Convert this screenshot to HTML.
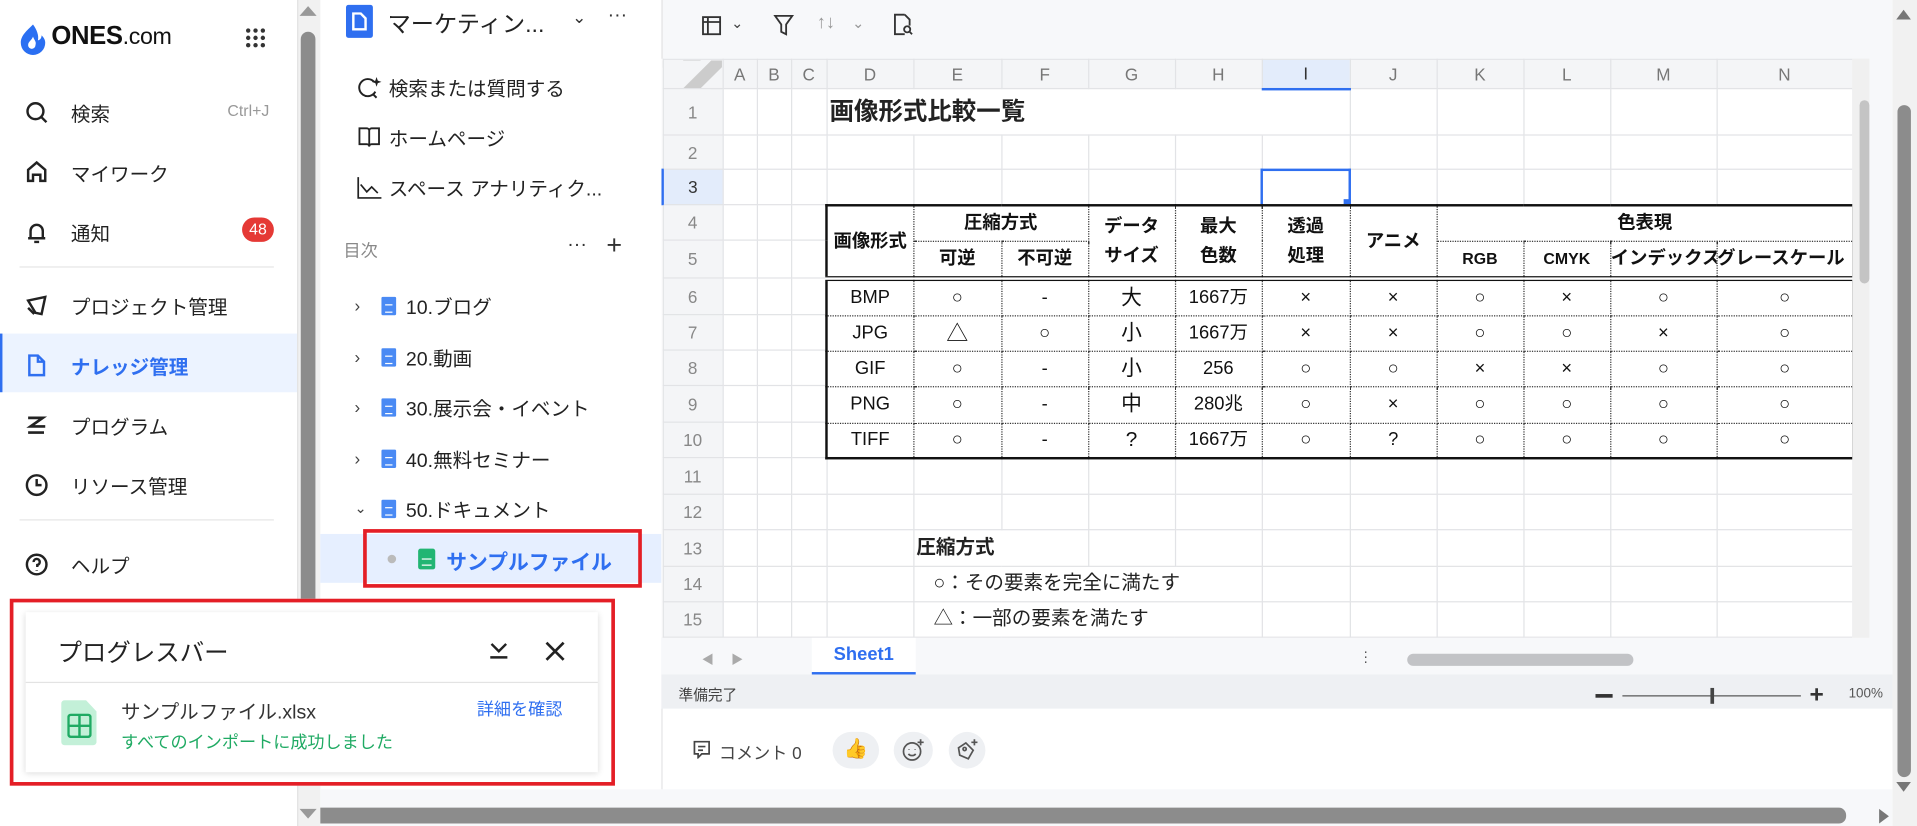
<!DOCTYPE html>
<html><head><meta charset="utf-8"><style>
*{box-sizing:border-box;margin:0;padding:0}
html,body{width:1917px;height:826px;overflow:hidden;background:#fff}
body{font-family:"Liberation Sans","Noto Sans CJK JP",sans-serif;color:#222}
#w{position:absolute;left:0;top:0;width:1568px;height:676px;transform:scale(1.2226,1.2219);transform-origin:0 0;overflow:hidden}
.a{position:absolute}
.nav{position:absolute;left:20px;font-size:16px;color:#222;display:flex;align-items:center}
.nav svg{margin-right:18px}
.tree{position:absolute;font-size:16px;color:#222;display:flex;align-items:center}
.doc{display:inline-block;width:12px;height:15px;background:#4a8af4;border-radius:1px;margin-right:8px;position:relative}
.doc:after{content:"";position:absolute;left:3px;top:6px;width:6px;height:5px;border-top:1px solid #fff;border-bottom:1px solid #fff}
.chev{display:inline-block;width:22px;color:#444;font-size:14px}
table{border-collapse:collapse;table-layout:fixed}
#g td{border:1px solid #e2e3e6;height:0;padding:0;font-size:15px;white-space:nowrap;overflow:visible;line-height:18px}
#g .rh{background:#f4f5f7;color:#888;text-align:center;font-size:14px}
#g .ch td{background:#f4f5f7;color:#777;text-align:center;font-size:14px}
#d td{border:1px dotted #333;text-align:center;font-size:15px;padding:0;color:#111;line-height:18px}
#d .h{font-weight:bold}
</style></head><body><div id="w">

<div class="a" style="left:0;top:0;width:243px;height:676px;background:#fff"></div>
<svg class="a" style="left:15px;top:19px" width="24" height="26" viewBox="0 0 24 26"><path d="M12 1C7 6 2 10 2 16a10 10 0 0 0 20 0c0-3-2-5-3-6 0 3-2 4-3 4 1-4-1-9-4-13z" fill="#2a6ff2"/><path d="M8 18c0-3 3-4 4-7 1 3 3 4 2 7a3 3 0 0 1-6 0z" fill="#fff"/></svg>
<div class="a" style="left:42px;top:18px;font-size:21px;font-weight:bold;color:#111;letter-spacing:-0.3px">ONES<span style="font-weight:normal;font-size:19px">.com</span></div>
<svg class="a" style="left:201px;top:23px" width="16" height="16"><g fill="#333"><circle cx="2" cy="2" r="1.8"/><circle cx="8" cy="2" r="1.8"/><circle cx="14" cy="2" r="1.8"/><circle cx="2" cy="8" r="1.8"/><circle cx="8" cy="8" r="1.8"/><circle cx="14" cy="8" r="1.8"/><circle cx="2" cy="14" r="1.8"/><circle cx="8" cy="14" r="1.8"/><circle cx="14" cy="14" r="1.8"/></g></svg>

<div class="nav" style="top:80px"><svg width="20" height="20" viewBox="0 0 20 20" fill="none" stroke="#222" stroke-width="2"><circle cx="9" cy="9" r="6.5"/><path d="M14 14l4 4"/></svg>検索</div>
<div class="a" style="left:186px;top:83px;font-size:13px;color:#999">Ctrl+J</div>
<div class="nav" style="top:129px"><svg width="20" height="20" viewBox="0 0 20 20" fill="none" stroke="#222" stroke-width="2"><path d="M3 17V8l7-6 7 6v9h-4v-5H7v5z"/></svg>マイワーク</div>
<div class="nav" style="top:178px"><svg width="20" height="20" viewBox="0 0 20 20" fill="none" stroke="#222" stroke-width="2"><path d="M5 15V9a5 5 0 0 1 10 0v6zM3 15h14M8 18h4"/></svg>通知</div>
<div class="a" style="left:198px;top:178px;width:26px;height:20px;border-radius:10px;background:#e53935;color:#fff;font-size:13px;text-align:center;line-height:20px">48</div>
<div class="a" style="left:16px;top:218px;width:208px;height:1px;background:#e5e5e5"></div>
<div class="nav" style="top:238px"><svg width="20" height="20" viewBox="0 0 20 20" fill="none" stroke="#222" stroke-width="2"><path d="M3 6l14-3-3 14-5-1z"/><path d="M3 12l5 5"/></svg>プロジェクト管理</div>
<div class="a" style="left:0;top:273px;width:243px;height:48px;background:#ecf3ff;border-left:2px solid #2f6ff0"></div>
<div class="nav" style="top:287px;color:#2f6ff0;font-weight:bold"><svg width="20" height="20" viewBox="0 0 20 20" fill="none" stroke="#2f6ff0" stroke-width="2"><path d="M4 2h7l5 5v11H4z M11 2v5h5"/></svg>ナレッジ管理</div>
<div class="nav" style="top:336px"><svg width="20" height="20" viewBox="0 0 20 20" fill="none" stroke="#222" stroke-width="2.2"><path d="M3 4h12L5 11h12M3 16h13"/></svg>プログラム</div>
<div class="nav" style="top:385px"><svg width="20" height="20" viewBox="0 0 20 20" fill="none" stroke="#222" stroke-width="2"><circle cx="10" cy="10" r="8"/><path d="M10 5v5h4"/></svg>リソース管理</div>
<div class="a" style="left:16px;top:425px;width:208px;height:1px;background:#e5e5e5"></div>
<div class="nav" style="top:450px"><svg width="20" height="20" viewBox="0 0 20 20" fill="none" stroke="#222" stroke-width="2"><circle cx="10" cy="10" r="8"/><path d="M7.5 8a2.5 2.5 0 1 1 3 2.4V12M10 14.5v.5"/></svg>ヘルプ</div>

<div class="a" style="left:243px;top:0;width:19px;height:676px;background:#f1f1f1;border-left:1px solid #e3e3e3"></div>
<div class="a" style="left:246px;top:26px;width:12px;height:600px;background:#8c8c8c;border-radius:6px"></div>
<div class="a" style="left:245px;top:5px;width:0;height:0;border-left:7px solid transparent;border-right:7px solid transparent;border-bottom:8px solid #999"></div>
<div class="a" style="left:245px;top:662px;width:0;height:0;border-left:7px solid transparent;border-right:7px solid transparent;border-top:8px solid #999"></div>

<div class="a" style="left:283px;top:4px;width:22px;height:27px;background:#2f6ff0;border-radius:2px"></div>
<svg class="a" style="left:287px;top:10px" width="14" height="16" fill="none" stroke="#fff" stroke-width="2"><path d="M2 1h6l4 4v9H2z"/></svg>
<div class="a" style="left:317px;top:5px;font-size:19px;color:#222">マーケティン...</div>
<div class="a" style="left:468px;top:6px;font-size:14px;color:#333">&#8964;</div>
<div class="a" style="left:497px;top:4px;font-size:16px;color:#333">···</div>
<div class="tree" style="left:292px;top:59px"><svg width="20" height="20" style="margin-right:6px" fill="none" stroke="#222" stroke-width="1.6"><path d="M14 6a7 7 0 1 0 1 8M13 16l3 3"/><path d="M16 2l1 3 3 1-3 1-1 3-1-3-3-1 3-1z" fill="#222" stroke="none"/></svg>検索または質問する</div>
<div class="tree" style="left:292px;top:100px"><svg width="20" height="20" style="margin-right:6px" fill="none" stroke="#222" stroke-width="1.5"><path d="M2 3h6a2 2 0 0 1 2 2v13a2 2 0 0 0-2-2H2zM18 3h-6a2 2 0 0 0-2 2v13a2 2 0 0 1 2-2h6z"/></svg>ホームページ</div>
<div class="tree" style="left:292px;top:141px"><svg width="20" height="20" style="margin-right:6px" fill="none" stroke="#222" stroke-width="1.4"><path d="M1 2v17h19M3 8l5 6 4-4 5 5"/></svg>スペース アナリティク...</div>
<div class="a" style="left:281px;top:195px;font-size:14px;color:#888">目次</div>
<div class="a" style="left:464px;top:192px;font-size:16px;color:#333">···</div>
<div class="a" style="left:496px;top:188px;font-size:22px;color:#333;font-weight:300">+</div>
<div class="tree" style="left:290px;top:238px"><span class="chev">&#8250;</span><span class="doc"></span>10.ブログ</div>
<div class="tree" style="left:290px;top:280px"><span class="chev">&#8250;</span><span class="doc"></span>20.動画</div>
<div class="tree" style="left:290px;top:321px"><span class="chev">&#8250;</span><span class="doc"></span>30.展示会・イベント</div>
<div class="tree" style="left:290px;top:363px"><span class="chev">&#8250;</span><span class="doc"></span>40.無料セミナー</div>
<div class="tree" style="left:290px;top:404px"><span class="chev" style="font-size:12px">&#8964;</span><span class="doc"></span>50.ドキュメント</div>
<div class="a" style="left:262px;top:437px;width:279px;height:40px;background:#e6efff"></div>
<div class="a" style="left:297px;top:433px;width:228px;height:48px;border:3px solid #e41e26"></div>
<div class="a" style="left:317px;top:454px;width:7px;height:7px;border-radius:50%;background:#bbb"></div>
<div class="a" style="left:342px;top:449px;width:14px;height:17px;background:#22b573;border-radius:2px"></div>
<div class="a" style="left:345px;top:457px;width:8px;height:6px;border:1px solid #fff;border-width:1px 0"></div>
<div class="a" style="left:365px;top:446px;font-size:17px;color:#2f6ff0;font-weight:bold">サンプルファイル</div>
<div class="tree" style="left:312px;top:488px"><span style="display:inline-block;width:7px;height:7px;border-radius:50%;background:#bbb;margin-right:18px"></span><span class="doc"></span>90.その他</div>

<div class="a" style="left:8px;top:490px;width:495px;height:153px;border:3px solid #e41e26;background:#fff"></div>
<div class="a" style="left:21px;top:501px;width:468px;height:131px;background:#fff;box-shadow:0 1px 5px rgba(0,0,0,.15)"></div>
<div class="a" style="left:47px;top:518px;font-size:20px;color:#222">プログレスバー</div>
<svg class="a" style="left:399px;top:523px" width="18" height="18" fill="none" stroke="#222" stroke-width="2"><path d="M3 4l6 6 6-6M2 15h14"/></svg>
<svg class="a" style="left:445px;top:524px" width="18" height="18" fill="none" stroke="#222" stroke-width="2.2"><path d="M2 2l14 14M16 2L2 16"/></svg>
<div class="a" style="left:21px;top:558px;width:468px;height:1px;background:#e3e3e3"></div>
<div class="a" style="left:50px;top:573px;width:29px;height:37px;background:#c3f0d8;border-radius:3px;clip-path:polygon(0 0,70% 0,100% 25%,100% 100%,0 100%)"></div>
<svg class="a" style="left:55px;top:584px" width="20" height="20" fill="none" stroke="#1faa63" stroke-width="2"><rect x="1" y="1" width="18" height="18" rx="2"/><path d="M1 10h18M10 1v18"/></svg>
<div class="a" style="left:99px;top:569px;font-size:16px;color:#333">サンプルファイル.xlsx</div>
<div class="a" style="left:99px;top:597px;font-size:14px;color:#1faa63">すべてのインポートに成功しました</div>
<div class="a" style="left:390px;top:570px;font-size:14px;color:#2f6ff0">詳細を確認</div>

<div class="a" style="left:541px;top:0;width:1007px;height:646px;background:#f7f8fa;border-left:1px solid #e3e3e3"></div>
<svg class="a" style="left:573px;top:12px" width="18" height="18" fill="none" stroke="#333" stroke-width="1.5"><rect x="2" y="2" width="14" height="14"/><path d="M2 6h14M6 2v14"/></svg>
<div class="a" style="left:598px;top:12px;font-size:12px;color:#444">&#8964;</div>
<svg class="a" style="left:632px;top:11px" width="18" height="20" fill="none" stroke="#333" stroke-width="1.5"><path d="M2 2h14l-5 7v8l-4-2V9z"/></svg>
<div class="a" style="left:668px;top:10px;font-size:15px;color:#999">&#8593;&#8595;</div>
<div class="a" style="left:697px;top:12px;font-size:12px;color:#999">&#8964;</div>
<svg class="a" style="left:729px;top:10px" width="18" height="20" fill="none" stroke="#333" stroke-width="1.5"><path d="M11 2H3v16h8M11 2l4 4v5"/><circle cx="13" cy="14" r="2.5"/><path d="M15 16l2 2"/></svg>

<div class="a" style="left:541px;top:48px;width:974px;height:474px;overflow:hidden">
<table id="g" class="a" style="left:0;top:0;width:974px;background:#fff">
<colgroup><col style="width:49px"><col style="width:28px"><col style="width:28px"><col style="width:29px"><col style="width:71px"><col style="width:72px"><col style="width:71px"><col style="width:71px"><col style="width:71px"><col style="width:72px"><col style="width:71px"><col style="width:71px"><col style="width:71px"><col style="width:87px"><col style="width:111px"></colgroup>
<tr class="ch" style="height:24px"><td style="background:linear-gradient(135deg,#f4f5f7 55%,#ccc 55%,#ccc 75%,#f4f5f7 75%)"></td><td>A</td><td>B</td><td>C</td><td>D</td><td>E</td><td>F</td><td>G</td><td>H</td><td style="background:#e3ecfb;color:#333;border-bottom:2px solid #2f6ff0">I</td><td>J</td><td>K</td><td>L</td><td>M</td><td>N</td></tr>
<tr style="height:38px"><td class="rh">1</td><td></td><td></td><td></td><td colspan="5" style="font-size:20px;font-weight:bold;padding-left:2px;border-right-color:transparent">画像形式比較一覧</td><td></td><td></td><td></td><td></td><td></td><td></td></tr>
<tr style="height:28px"><td class="rh">2</td><td></td><td></td><td></td><td></td><td></td><td></td><td></td><td></td><td></td><td></td><td></td><td></td><td></td><td></td></tr>
<tr style="height:29px"><td class="rh" style="background:#e3ecfb;color:#333;border-left:2px solid #2f6ff0">3</td><td></td><td></td><td></td><td></td><td></td><td></td><td></td><td></td><td style="border:2px solid #2f6ff0"></td><td></td><td></td><td></td><td></td><td></td></tr>
<tr style="height:29px"><td class="rh">4</td><td></td><td></td><td></td><td></td><td></td><td></td><td></td><td></td><td></td><td></td><td></td><td></td><td></td><td></td></tr>
<tr style="height:31px"><td class="rh">5</td><td></td><td></td><td></td><td></td><td></td><td></td><td></td><td></td><td></td><td></td><td></td><td></td><td></td><td></td></tr>
<tr style="height:30px"><td class="rh">6</td><td></td><td></td><td></td><td></td><td></td><td></td><td></td><td></td><td></td><td></td><td></td><td></td><td></td><td></td></tr>
<tr style="height:29px"><td class="rh">7</td><td></td><td></td><td></td><td></td><td></td><td></td><td></td><td></td><td></td><td></td><td></td><td></td><td></td><td></td></tr>
<tr style="height:29px"><td class="rh">8</td><td></td><td></td><td></td><td></td><td></td><td></td><td></td><td></td><td></td><td></td><td></td><td></td><td></td><td></td></tr>
<tr style="height:30px"><td class="rh">9</td><td></td><td></td><td></td><td></td><td></td><td></td><td></td><td></td><td></td><td></td><td></td><td></td><td></td><td></td></tr>
<tr style="height:29px"><td class="rh">10</td><td></td><td></td><td></td><td></td><td></td><td></td><td></td><td></td><td></td><td></td><td></td><td></td><td></td><td></td></tr>
<tr style="height:30px"><td class="rh">11</td><td></td><td></td><td></td><td></td><td></td><td></td><td></td><td></td><td></td><td></td><td></td><td></td><td></td><td></td></tr>
<tr style="height:29px"><td class="rh">12</td><td></td><td></td><td></td><td></td><td></td><td></td><td></td><td></td><td></td><td></td><td></td><td></td><td></td><td></td></tr>
<tr style="height:30px"><td class="rh">13</td><td></td><td></td><td></td><td></td><td colspan="2" style="font-weight:bold;font-size:16px;padding-left:2px">圧縮方式</td><td></td><td></td><td></td><td></td><td></td><td></td><td></td><td></td></tr>
<tr style="height:29px"><td class="rh">14</td><td></td><td></td><td></td><td></td><td colspan="4" style="font-size:16px;padding-left:16px;border-right-color:#e2e3e6">○：その要素を完全に満たす</td><td></td><td></td><td></td><td></td><td></td><td></td></tr>
<tr style="height:29px"><td class="rh">15</td><td></td><td></td><td></td><td></td><td colspan="4" style="font-size:16px;padding-left:16px">△：一部の要素を満たす</td><td></td><td></td><td></td><td></td><td></td><td></td></tr>
</table>
</div>
<div class="a" style="left:1099px;top:163px;width:6px;height:6px;background:#2f6ff0"></div>

<table id="d" class="a" style="left:675px;top:167px;width:840px;border:2px solid #111;background:#fff">
<colgroup><col style="width:71px"><col style="width:72px"><col style="width:71px"><col style="width:71px"><col style="width:71px"><col style="width:72px"><col style="width:71px"><col style="width:71px"><col style="width:71px"><col style="width:87px"><col style="width:112px"></colgroup>
<tr style="height:29px"><td class="h" rowspan="2" style="font-size:15px;white-space:nowrap;overflow:hidden">画像形式</td><td class="h" colspan="2">圧縮方式</td><td class="h" rowspan="2" style="line-height:24px">データ<br>サイズ</td><td class="h" rowspan="2" style="line-height:24px">最大<br>色数</td><td class="h" rowspan="2" style="line-height:24px">透過<br>処理</td><td class="h" rowspan="2">アニメ</td><td class="h" colspan="4">色表現</td></tr>
<tr style="height:31px;border-bottom:4px double #111"><td class="h">可逆</td><td class="h">不可逆</td><td class="h" style="font-size:13px">RGB</td><td class="h" style="font-size:13px">CMYK</td><td class="h" style="white-space:nowrap;overflow:hidden;text-align:right">インデックス</td><td class="h" style="white-space:nowrap;overflow:hidden;text-align:left">グレースケール</td></tr>
<tr style="height:30px"><td>BMP</td><td>○</td><td>-</td><td style="font-size:17px">大</td><td>1667万</td><td>×</td><td>×</td><td>○</td><td>×</td><td>○</td><td>○</td></tr>
<tr style="height:29px"><td>JPG</td><td style="font-size:18px">△</td><td>○</td><td style="font-size:17px">小</td><td>1667万</td><td>×</td><td>×</td><td>○</td><td>○</td><td>×</td><td>○</td></tr>
<tr style="height:29px"><td>GIF</td><td>○</td><td>-</td><td style="font-size:17px">小</td><td>256</td><td>○</td><td>○</td><td>×</td><td>×</td><td>○</td><td>○</td></tr>
<tr style="height:30px"><td>PNG</td><td>○</td><td>-</td><td style="font-size:17px">中</td><td>280兆</td><td>○</td><td>×</td><td>○</td><td>○</td><td>○</td><td>○</td></tr>
<tr style="height:29px"><td>TIFF</td><td>○</td><td>-</td><td style="font-size:17px">?</td><td>1667万</td><td>○</td><td>?</td><td>○</td><td>○</td><td>○</td><td>○</td></tr>
</table>

<div class="a" style="left:1515px;top:48px;width:14px;height:474px;background:#f0f0f0"></div>
<div class="a" style="left:1521px;top:82px;width:8px;height:150px;background:#c4c4c4;border-radius:4px"></div>

<div class="a" style="left:541px;top:522px;width:1007px;height:30px;background:#f7f8fa"></div>
<div class="a" style="left:574px;top:531px;font-size:10px;color:#aaa">&#9664;&nbsp;&nbsp;&nbsp;&nbsp;&nbsp;&#9654;</div>
<div class="a" style="left:664px;top:522px;width:85px;height:30px;background:#fff;border-bottom:2px solid #2f6ff0;color:#2f6ff0;font-weight:bold;font-size:15px;text-align:center;line-height:28px">Sheet1</div>
<div class="a" style="left:1115px;top:531px;font-size:12px;color:#555;line-height:4px">·<br>·<br>·</div>
<div class="a" style="left:1151px;top:535px;width:185px;height:10px;background:#c2c3c6;border-radius:5px"></div>
<div class="a" style="left:541px;top:552px;width:1007px;height:28px;background:#eef0f3"></div>
<div class="a" style="left:555px;top:560px;font-size:12px;color:#444">準備完了</div>
<div class="a" style="left:1305px;top:568px;width:14px;height:3px;background:#333"></div>
<div class="a" style="left:1327px;top:569px;width:146px;height:1px;background:#555"></div>
<div class="a" style="left:1399px;top:563px;width:3px;height:13px;background:#444"></div>
<div class="a" style="left:1480px;top:560px;font-size:20px;color:#333;line-height:18px;font-weight:bold">+</div>
<div class="a" style="left:1512px;top:562px;font-size:11px;color:#555">100%</div>
<div class="a" style="left:542px;top:580px;width:1006px;height:66px;background:#fff"></div>
<svg class="a" style="left:566px;top:605px" width="16" height="16" fill="none" stroke="#444" stroke-width="1.4"><path d="M2 2h12v10H8l-3 3v-3H2z M5 6h6M5 9h4"/></svg>
<div class="a" style="left:588px;top:606px;font-size:14px;color:#444">コメント 0</div>
<div class="a" style="left:681px;top:599px;width:38px;height:30px;border-radius:15px;background:#eef0f3;text-align:center;line-height:30px;font-size:16px;color:#f5a623">&#128077;</div>
<div class="a" style="left:731px;top:599px;width:32px;height:30px;border-radius:15px;background:#eef0f3"></div>
<svg class="a" style="left:737px;top:604px" width="20" height="20" fill="none" stroke="#555" stroke-width="1.4"><circle cx="9" cy="11" r="7"/><path d="M6 13a4 4 0 0 0 6 0M6.5 9v.5M11.5 9v.5M16 1v5M13.5 3.5h5"/></svg>
<div class="a" style="left:776px;top:599px;width:30px;height:30px;border-radius:15px;background:#eef0f3"></div>
<svg class="a" style="left:781px;top:604px" width="20" height="20" fill="none" stroke="#555" stroke-width="1.4"><path d="M3 8l6-4 6 6-4 7-7-3z"/><circle cx="8" cy="9" r="1.3"/><path d="M16 1v5M13.5 3.5h5"/></svg>

<div class="a" style="left:262px;top:646px;width:1286px;height:30px;background:#f7f8fa"></div>
<div class="a" style="left:262px;top:661px;width:1248px;height:13px;background:#8c8c8c;border-radius:0 6px 6px 0"></div>
<div class="a" style="left:1537px;top:662px;width:0;height:0;border-top:6px solid transparent;border-bottom:6px solid transparent;border-left:8px solid #777"></div>
<div class="a" style="left:1548px;top:0;width:20px;height:676px;background:#f1f1f1"></div>
<div class="a" style="left:1552px;top:86px;width:11px;height:550px;background:#8c8c8c;border-radius:6px"></div>
<div class="a" style="left:1551px;top:8px;width:0;height:0;border-left:6px solid transparent;border-right:6px solid transparent;border-bottom:8px solid #777"></div>
<div class="a" style="left:1551px;top:640px;width:0;height:0;border-left:6px solid transparent;border-right:6px solid transparent;border-top:8px solid #777"></div>
</div></body></html>
